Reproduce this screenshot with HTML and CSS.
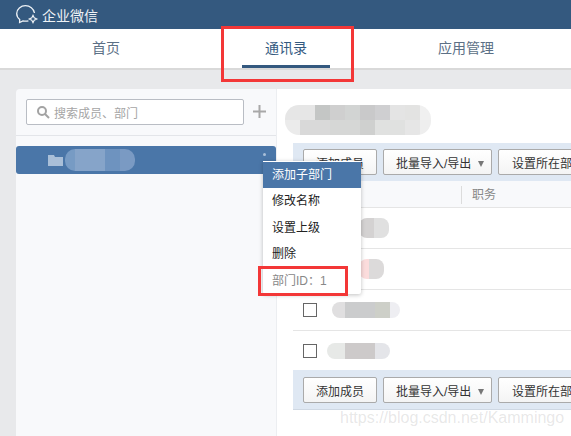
FILE: index.html
```html
<!DOCTYPE html>
<html lang="zh">
<head>
  <meta charset="UTF-8"/>
  <title>企业微信</title>
  <link rel="stylesheet" href="styles.css">
</head>
<body>
  <!-- Top bar -->
  <header class="topbar">
    <svg class="logo" width="24" height="20" viewBox="0 0 24 20" fill="none" stroke="#eef2f6" stroke-width="1.300">
      <path d="M19.500 8C18.800 3.500 14.800.7 10.500.7 5.800.7 1.700 4 1.700 8.500c0 2.400 1.100 4.500 3 5.900L4.600 17.500l3.300-1.600c.8.2 1.700.3 2.600.3 1 0 2-.1 2.900-.4"/>
      <path d="M18 10.200l1.200 2.600 2.600 1.200-2.600 1.200L18 17.800l-1.200-2.600-2.600-1.200 2.600-1.200z" stroke-width="1.100"/>
    </svg>
    <span class="brand">企业微信</span>
  </header>

  <!-- Nav -->
  <nav class="tabs">
    <a class="tab">首页</a>
    <a class="tab active">通讯录</a>
    <a class="tab">应用管理</a>
  </nav>

  <main class="content">
    <!-- Departments -->
    <aside class="side">
      <div class="search-row">
        <div class="search">
          <svg width="14" height="14" viewBox="0 0 14 14" fill="none" stroke="#a3a3a3" stroke-width="2">
            <circle cx="6" cy="6" r="4"/><path d="M9 9l4 4"/>
          </svg>
          <span>搜索成员、部门</span>
        </div>
        <svg class="plus" width="13" height="13" viewBox="0 0 13 13" fill="#a8a8a8">
          <rect x="5.500" width="2" height="13"/><rect y="5.500" width="13" height="2"/>
        </svg>
      </div>
      <div class="dept">
        <svg width="15" height="11" viewBox="0 0 15 11" fill="#a9bfd8">
          <path d="M0 0h6l1 2h8v9H0z"/>
        </svg>
        <div class="mosaic dept-name">
          <i class="cell" style="background:#779bc4;width:10px"></i>
          <i class="cell" style="background:#86a4c9;width:30px"></i>
          <i class="cell" style="background:#6e93bf;width:15px"></i>
          <i class="cell" style="background:#7a9ac3;width:15px"></i>
        </div>
        <span class="dots"></span>
      </div>
    </aside>

    <!-- Members -->
    <section class="main">
      <div class="title">
        <div class="strip">
          <i class="cell" style="background:#e6e6e6;width:30px"></i>
          <i class="cell" style="background:#c4c6c5;width:15px"></i>
          <i class="cell" style="background:#cfcfcf;width:15px"></i>
          <i class="cell" style="background:#d2d4d3;width:15px"></i>
          <i class="cell" style="background:#c9c9ca;width:15px"></i>
          <i class="cell" style="background:#cfcfd1;width:15px"></i>
          <i class="cell" style="background:#e4e4e4;width:15px"></i>
          <i class="cell" style="background:#e3e3e2;width:15px"></i>
          <i class="cell" style="background:#f0f0f0;width:11px"></i>
        </div>
        <div class="strip">
          <i class="cell" style="background:#ebebeb;width:15px"></i>
          <i class="cell" style="background:#d9d9d9;width:30px"></i>
          <i class="cell" style="background:#d6d7d6;width:30px"></i>
          <i class="cell" style="background:#cfd0cf;width:15px"></i>
          <i class="cell" style="background:#e0e1e0;width:30px"></i>
          <i class="cell" style="background:#e6e6e6;width:15px"></i>
          <i class="cell" style="background:#eeeeee;width:11px"></i>
        </div>
      </div>
      <div class="toolbar">
        <button class="btn">添加成员</button>
        <button class="btn split">批量导入/导出<b class="caret"></b></button>
        <button class="btn wide">设置所在部门</button>
      </div>
      <div class="thead">
        <span class="th">职务</span>
      </div>
      <div class="row">
        <div class="mosaic row-blur"><i class="cell" style="background:#d4d2d2;width:15px"></i><i class="cell" style="background:#e0e0e0;width:15px"></i></div>
      </div>
      <div class="row">
        <div class="mosaic row-blur"><i class="cell" style="background:#fbdcdc;width:10px"></i><i class="cell" style="background:#dcdada;width:15px"></i></div>
      </div>
      <div class="row">
        <span class="check"></span>
        <div class="mosaic"><i class="cell" style="background:#e0dfe0;width:13px"></i><i class="cell" style="background:#cbcccd;width:30px"></i><i class="cell" style="background:#cdcfc8;width:15px"></i><i class="cell" style="background:#eeeef2;width:10px"></i></div>
      </div>
      <div class="row last">
        <span class="check"></span>
        <div class="mosaic shift"><i class="cell" style="background:#e7e9e7;width:18px"></i><i class="cell" style="background:#cdcaca;width:30px"></i><i class="cell" style="background:#e4e5e9;width:15px"></i></div>
      </div>
      <div class="toolbar bottom">
        <button class="btn">添加成员</button>
        <button class="btn split">批量导入/导出<b class="caret"></b></button>
        <button class="btn wide">设置所在部门</button>
      </div>
    </section>
  </main>

  <!-- Context menu -->
  <ul class="menu">
    <li class="on">添加子部门</li>
    <li>修改名称</li>
    <li>设置上级</li>
    <li>删除</li>
    <li class="muted">部门ID：1</li>
  </ul>

  <!-- Annotations on the screenshot -->
  <div class="mark mark-tab"></div>
  <div class="mark mark-id"></div>
  <div class="watermark">https://blog.csdn.net/Kammingo</div>
</body>
</html>
```

FILE: styles.css
```css
* { box-sizing: border-box; margin: 0; padding: 0; }
html, body { height: 100%; overflow: hidden; }
body {
  position: relative;
  font-family: "Liberation Sans", "Noto Sans CJK SC", sans-serif;
  font-size: 13px;
  background: #e8e9eb;
  color: #333;
}

/* Top bar */
.topbar {
  height: 29px;
  background: #34597f;
  padding-left: 15px;
  display: flex;
  align-items: center;
  gap: 3px;
  color: #eef2f6;
}
.brand { font-size: 14px; }

/* Nav */
.tabs {
  height: 41px;
  background: #fff;
  border-bottom: 2px solid #d9d9d9;
  display: flex;
  padding-left: 16px;
}
.tab {
  width: 180px;
  text-align: center;
  line-height: 39px;
  color: #5c7086;
  font-size: 14px;
  position: relative;
}
.tab.active { color: #34597f; }
.tab.active::after {
  content: '';
  position: absolute;
  left: 46px; right: 46px; bottom: 0;
  height: 3px;
  background: #34597f;
}

/* Layout */
.content {
  display: flex;
  margin: 19px 0 0 16px;
  height: 347px;
}
.side {
  width: 261px;
  background: #f8f9fb;
  border-radius: 4px 0 0 0;
  border-right: 1px solid #eceef1;
  flex: none;
}
.main { flex: 1; background: #fff; min-width: 0; }

/* Search */
.search-row {
  height: 47px;
  padding: 10px 0 0 10px;
  display: flex;
  align-items: flex-start;
  gap: 9px;
  border-bottom: 1px solid #e3e5e9;
}
.search {
  width: 218px;
  height: 26px;
  background: #fff;
  border: 1px solid #b9bdc4;
  border-radius: 2px;
  padding-left: 9px;
  display: flex;
  align-items: center;
  gap: 4px;
  color: #a5a5a5;
  font-size: 12px;
}
.plus { margin-top: 6px; }

/* Selected department */
.dept {
  margin-top: 10px;
  height: 28px;
  background: #4a76a8;
  border-radius: 3px;
  display: flex;
  align-items: center;
  padding-left: 32px;
  position: relative;
}
.dots {
  position: absolute;
  right: 10px; top: 7px;
  width: 3px; height: 3px;
  border-radius: 50%;
  background: #a9bfd8;
}

/* Blurred names */
.mosaic { display: flex; height: 16px; border-radius: 8px; overflow: hidden; }
.cell { display: block; height: 100%; }
.dept-name { height: 22px; border-radius: 10px; margin-left: 2px; }
.title {
  width: 146px;
  height: 30px;
  margin: 16px 0 8px 8px;
  border-radius: 14px;
  overflow: hidden;
}
.strip { display: flex; height: 15px; }
.row .mosaic { margin-left: 15px; }
.row .mosaic.row-blur { margin-left: 56px; height: 20px; }
.row .mosaic.shift { margin-left: 10px; }

/* Toolbars */
.toolbar {
  margin-left: 16px;
  height: 38px;
  background: #dfe8f3;
  padding: 6px 0 0 10px;
  display: flex;
  gap: 6px;
  overflow: hidden;
}
.toolbar.bottom { height: 40px; border-bottom: 1px solid #cfd8e3; padding-top: 7px; }
.btn {
  flex: none;
  width: 74px;
  height: 26px;
  background: linear-gradient(#fff, #f4f4f4);
  border: 1px solid #aaa;
  border-radius: 2px;
  font: 12px "Liberation Sans", "Noto Sans CJK SC", sans-serif;
  color: #333;
}
.btn.split { width: 109px; text-align: left; padding-left: 12px; }
.btn.wide { width: 100px; }
.caret {
  display: inline-block;
  border: 3px solid transparent;
  border-top: 6px solid #777;
  border-bottom: 0;
  margin-left: 7px;
  vertical-align: 1px;
}

/* Table */
.thead {
  margin-left: 16px;
  height: 27px;
  background: #f8f9fb;
  border-bottom: 1px solid #e5e5e5;
  padding: 1px 0 0 168px;
  display: flex;
  align-items: center;
}
.th {
  border-left: 1px solid #dcdcdc;
  padding-left: 10px;
  font-size: 12px;
  line-height: 18px;
  color: #888;
}
.row {
  margin-left: 16px;
  height: 41px;
  border-bottom: 1px solid #e5e5e5;
  padding-left: 10px;
  display: flex;
  align-items: center;
}
.row.last { height: 39px; border-bottom: 0; }
.check { width: 14px; height: 14px; border: 1px solid #666; flex: none; background: #fff; }

/* Context menu */
.menu {
  position: absolute;
  left: 263px; top: 161px;
  width: 98px;
  padding-top: 1px;
  list-style: none;
  background: #fff;
  box-shadow: 0 1px 4px rgba(0,0,0,.25);
  border-radius: 0 0 2px 2px;
  font-size: 12px;
}
.menu li { height: 26.4px; line-height: 26.4px; padding-left: 9px; color: #222; }
.menu li.on { background: #4a76a8; color: #fff; }
.menu li.muted { color: #888; }

/* Annotations */
.mark { position: absolute; border: 3px solid #f33737; }
.mark-tab { left: 221px; top: 26px; width: 133px; height: 56px; }
.mark-id { left: 258px; top: 266px; width: 90px; height: 30px; }
.watermark {
  position: absolute;
  left: 340px; top: 409px;
  font: 16px "Liberation Sans", sans-serif;
  color: rgba(120,120,120,.18);
}
```
